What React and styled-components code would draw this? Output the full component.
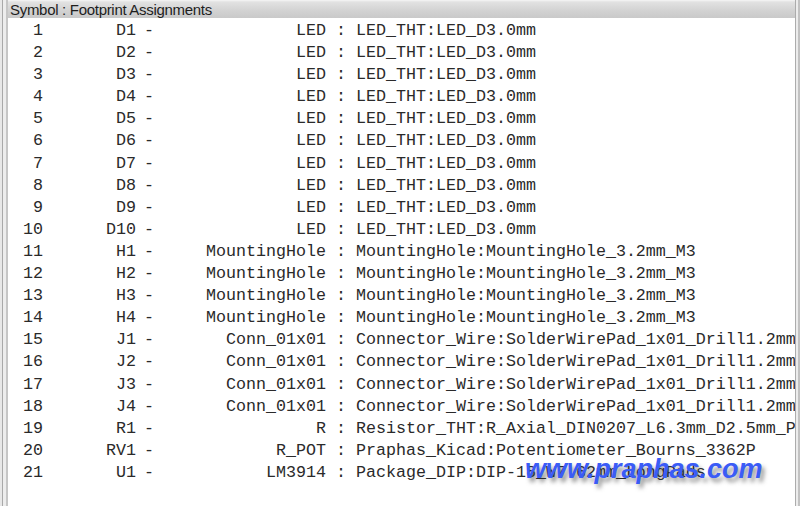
import React from 'react';
import styled, { createGlobalStyle } from 'styled-components';

const GlobalStyle = createGlobalStyle`
  html, body {
    margin: 0;
    padding: 0;
    overflow: hidden;
    background: #ffffff;
  }
`;

const Window = styled.div`
  position: relative;
  display: flex;
  width: 800px;
  height: 506px;
  overflow: hidden;
  background: #ffffff;
`;

const LeftEdge = styled.div`
  width: 8px;
  flex-shrink: 0;
  background: linear-gradient(
    to right,
    #e8e8e8 0, #e8e8e8 2px,
    #a9a9a9 2px, #a9a9a9 3px,
    #ededed 3px, #ededed 6px,
    #c6c6c6 6px, #c6c6c6 8px
  );
`;

const RightEdge = styled.div`
  width: 5px;
  flex-shrink: 0;
  background: linear-gradient(
    to right,
    #acacac 0, #acacac 1px,
    #ececec 1px, #ececec 3px,
    #c2c2c2 3px, #c2c2c2 5px
  );
`;

const Main = styled.div`
  flex: 1;
  min-width: 0;
  display: flex;
  flex-direction: column;
`;

const Header = styled.div`
  height: 18px;
  flex-shrink: 0;
  display: flex;
  align-items: center;
  padding-left: 2px;
  background: linear-gradient(#f6f6f6 0, #e2e2e2 2px, #d2d2d2 60%, #c9c9c9 100%);
  font-family: "Liberation Sans", Arial, sans-serif;
  font-size: 15px;
  letter-spacing: -0.3px;
  color: #1e1e1e;
  white-space: nowrap;
`;

const List = styled.div`
  flex: 1;
  overflow: hidden;
  padding-top: 2px;
  font-family: "Liberation Mono", "Courier New", monospace;
  font-size: 16.67px;
  color: #2a2a2a;
`;

const Row = styled.div`
  display: flex;
  height: 22.1px;
  line-height: 22px;
  white-space: nowrap;
`;

const Num = styled.span`
  width: 35px;
  flex-shrink: 0;
  text-align: right;
`;

const Ref = styled.span`
  width: 93px;
  flex-shrink: 0;
  text-align: right;
`;

const Dash = styled.span`
  width: 18px;
  flex-shrink: 0;
  text-align: right;
`;

const Value = styled.span`
  width: 172px;
  flex-shrink: 0;
  text-align: right;
`;

const Sep = styled.span`
  white-space: pre;
  flex-shrink: 0;
`;

const Footprint = styled.span`
  flex-shrink: 0;
`;

const Watermark = styled.div`
  position: absolute;
  left: 525px;
  top: 456px;
  font-family: "Liberation Sans", Arial, sans-serif;
  font-weight: bold;
  font-style: italic;
  font-size: 27px;
  line-height: 1;
  color: #3b5cf6;
  text-shadow: 3px 4px 4px rgba(60, 60, 60, 0.55);
  white-space: nowrap;
`;

const led = 'LED_THT:LED_D3.0mm';
const hole = 'MountingHole:MountingHole_3.2mm_M3';
const conn = 'Connector_Wire:SolderWirePad_1x01_Drill1.2mm';

const rows = [
  ['D1', 'LED', led],
  ['D2', 'LED', led],
  ['D3', 'LED', led],
  ['D4', 'LED', led],
  ['D5', 'LED', led],
  ['D6', 'LED', led],
  ['D7', 'LED', led],
  ['D8', 'LED', led],
  ['D9', 'LED', led],
  ['D10', 'LED', led],
  ['H1', 'MountingHole', hole],
  ['H2', 'MountingHole', hole],
  ['H3', 'MountingHole', hole],
  ['H4', 'MountingHole', hole],
  ['J1', 'Conn_01x01', conn],
  ['J2', 'Conn_01x01', conn],
  ['J3', 'Conn_01x01', conn],
  ['J4', 'Conn_01x01', conn],
  ['R1', 'R', 'Resistor_THT:R_Axial_DIN0207_L6.3mm_D2.5mm_P10.16mm_Horizontal'],
  ['RV1', 'R_POT', 'Praphas_Kicad:Potentiometer_Bourns_3362P'],
  ['U1', 'LM3914', 'Package_DIP:DIP-18_W7.62mm_LongPads'],
];

const App = () => (
  <>
    <GlobalStyle />
    <Window>
      <LeftEdge />
      <Main>
        <Header>Symbol : Footprint Assignments</Header>
        <List>
          {rows.map(([ref, value, fp], i) => (
            <Row key={ref}>
              <Num>{i + 1}</Num>
              <Ref>{ref}</Ref>
              <Dash>-</Dash>
              <Value>{value}</Value>
              <Sep>{' : '}</Sep>
              <Footprint>{fp}</Footprint>
            </Row>
          ))}
        </List>
      </Main>
      <RightEdge />
      <Watermark>www.praphas.com</Watermark>
    </Window>
  </>
);

export default App;
